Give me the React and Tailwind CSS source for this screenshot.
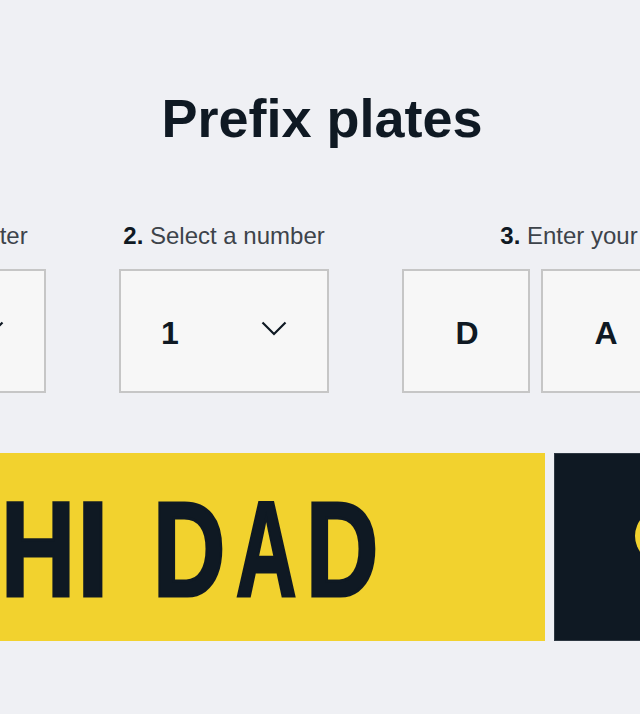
import React from 'react';

const Chevron = () => (
  <svg width="26" height="15" viewBox="0 0 26 15" fill="none" className="mb-[6px]">
    <path d="M1.5 1.5 L13 13 L24.5 1.5" stroke="#0f1923" strokeWidth="2.2" />
  </svg>
);

function StepLabel({ num, text }) {
  return (
    <p className="text-[24px] leading-none text-[#3d434a] whitespace-nowrap">
      <span className="font-bold text-[#0f1923]">{num}.</span> {text}
    </p>
  );
}

function SelectBox({ value }) {
  return (
    <div className="w-[210px] h-[124px] border-2 border-[#c6c6c6] bg-[#f7f7f7] flex items-center justify-between pl-[40px] pr-[40px]">
      <span className="text-[32px] leading-none font-bold mt-[4px]">{value}</span>
      <Chevron />
    </div>
  );
}

function LetterBox({ value }) {
  return (
    <div className="w-[128px] h-[124px] border-2 border-[#c6c6c6] bg-[#f7f7f7] flex items-center justify-center pl-[2px]">
      <span className="text-[32px] leading-none font-bold mt-[4px]">{value}</span>
    </div>
  );
}

// each plate character sits in its own cell so the narrow plate lettering lines up
const plateChars = [
  { ch: 'H', cell: 'w-[62px]', scale: 'scale-x-[0.76]', gap: 'mr-[14px]' },
  { ch: 'I', cell: 'w-[18px]', scale: 'scale-x-[0.85]', gap: 'mr-[57px]' },
  { ch: 'D', cell: 'w-[62px]', scale: 'scale-x-[0.74]', gap: 'mr-[15px]' },
  { ch: 'A', cell: 'w-[62px]', scale: 'scale-x-[0.62]', gap: 'mr-[14px]' },
  { ch: 'D', cell: 'w-[62px]', scale: 'scale-x-[0.74]', gap: '' },
];

export default function App() {
  return (
    <div className="min-h-screen bg-[#eff0f4] overflow-hidden flex justify-center pl-1 font-['Liberation_Sans',Arial,sans-serif] text-[#0f1923]">
      <div className="w-[972px] shrink-0 flex flex-col">
        <h1 className="pt-[91px] text-center text-[54px] font-bold leading-none">Prefix plates</h1>

        <div className="mt-[79px] flex gap-[73px]">
          <div className="w-[210px] flex flex-col items-center gap-[21px]">
            <StepLabel num="1" text="Select a letter" />
            <SelectBox value="H" />
          </div>
          <div className="w-[210px] flex flex-col items-center gap-[21px]">
            <StepLabel num="2" text="Select a number" />
            <SelectBox value="1" />
          </div>
          <div className="w-[406px] flex flex-col items-center gap-[21px]">
            <StepLabel num="3" text="Enter your letters" />
            <div className="flex gap-[11px]">
              <LetterBox value="D" />
              <LetterBox value="A" />
              <LetterBox value="D" />
            </div>
          </div>
        </div>

        <div className="mt-[60px] flex gap-[9px]">
          <div className="w-[709px] h-[188px] shrink-0 bg-[#f2d22e] flex items-center justify-center">
            <div className="flex mt-[4px]">
              {plateChars.map((c, i) => (
                <div key={i} className={`${c.cell} ${c.gap} flex justify-center`}>
                  <span className={`inline-block text-[136px] leading-none font-bold [-webkit-text-stroke:3px_#0f1923] ${c.scale}`}>{c.ch}</span>
                </div>
              ))}
            </div>
          </div>
          <div className="w-[709px] h-[188px] shrink-0 bg-[#0f1923] border border-[#2e3842] flex items-center pl-[80px]">
            <div className="w-[54px] h-[54px] rounded-full bg-[#f2d22e] mb-[22px]"></div>
          </div>
        </div>
      </div>
    </div>
  );
}
